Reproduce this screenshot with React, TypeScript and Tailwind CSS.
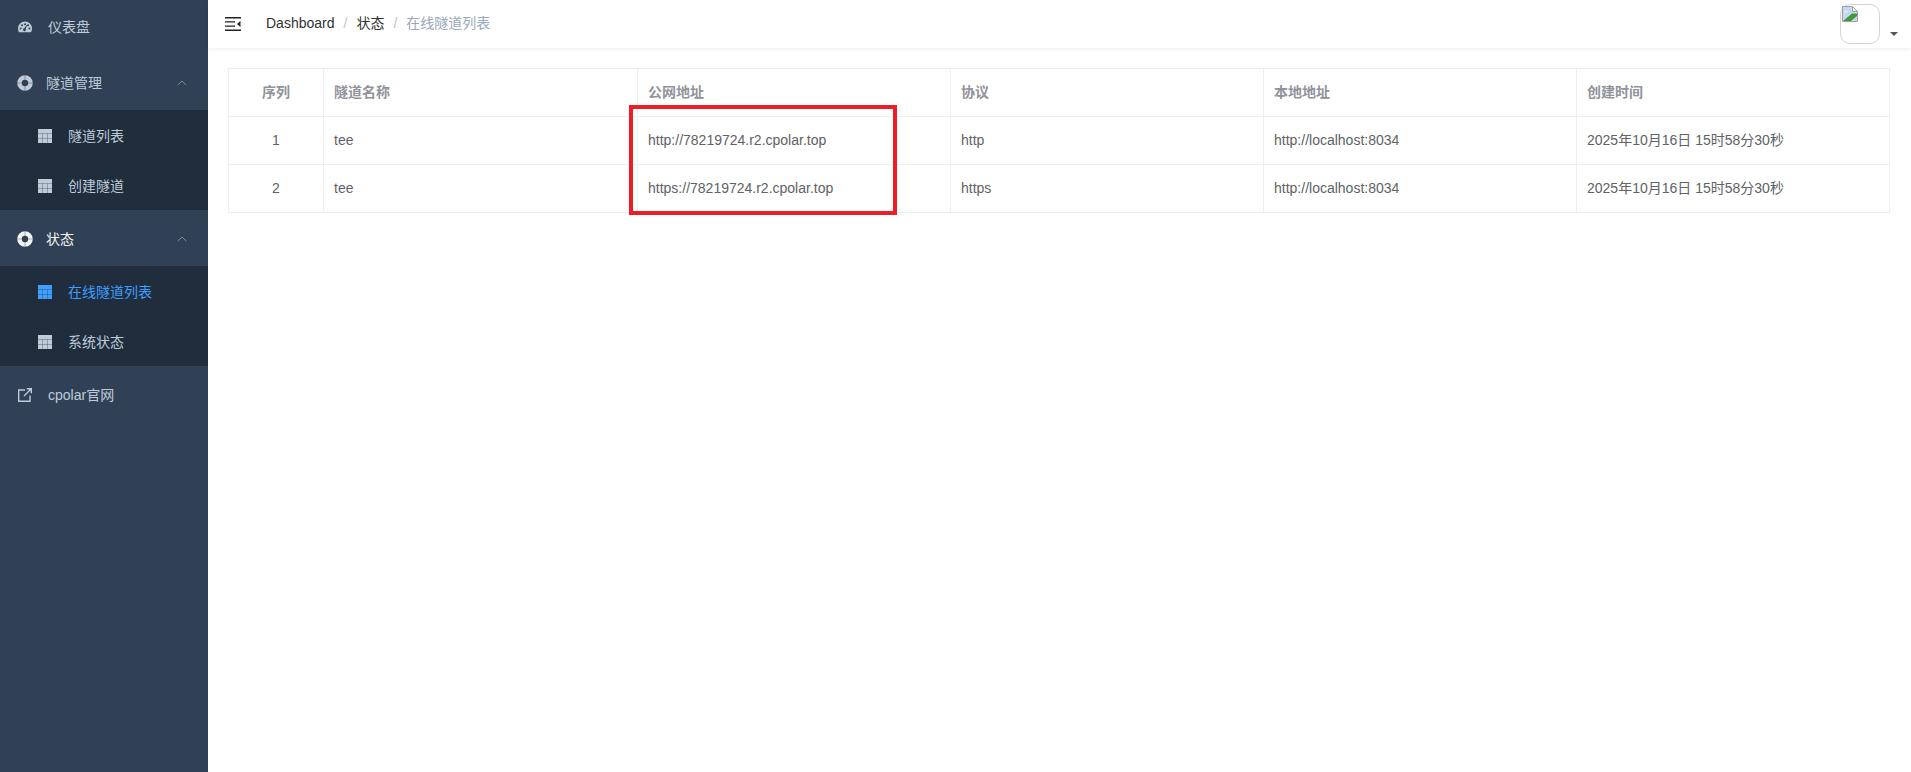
const cjk = "font-['Liberation_Sans','Noto_Sans_CJK_SC',sans-serif]";

function GaugeIcon() {
  return (
    <svg width="14" height="12" viewBox="0 0 14 12" className="shrink-0">
      <path
        fill="#bfcbd9"
        fillRule="evenodd"
        d="M7 0.5a7 7 0 0 1 7 7c0 1.5-.4 2.9-1.1 3.8H1.1C.4 10.4 0 9 0 7.5a7 7 0 0 1 7-7ZM2.6 6.4a1 1 0 1 0 0 2 1 1 0 0 0 0-2Zm1.5-3.2a1 1 0 1 0 0 2 1 1 0 0 0 0-2Zm3-1a1 1 0 1 0 0 2 1 1 0 0 0 0-2Zm3 1a1 1 0 1 0 0 2 1 1 0 0 0 0-2Zm1.3 3.2a1 1 0 1 0 0 2 1 1 0 0 0 0-2ZM8.6 4 6.4 7.2a1.5 1.5 0 1 0 1.3.6L9.3 4.3Z"
      />
    </svg>
  );
}

function RingIcon({ color }: { color: string }) {
  return (
    <svg width="16" height="16" viewBox="0 0 16 16" className="shrink-0">
      <circle cx="8" cy="8" r="5.5" fill="none" stroke={color} strokeWidth="4.6" />
      <path d="M0 8h5M11 8h5M8 0v5M8 11v5" stroke="#304156" strokeWidth="0.8" strokeOpacity="0.5" />
    </svg>
  );
}

function TableIcon({ color }: { color: string }) {
  return (
    <svg width="14" height="14" viewBox="0 0 14 14" className="shrink-0">
      <rect width="14" height="14" fill={color} />
      <path d="M0 4.5h14M0 9.5h14M4.5 4.5V14M9.5 4.5V14" stroke="#1f2d3d" strokeWidth="1" strokeOpacity="0.3" />
    </svg>
  );
}

function ExternalIcon() {
  return (
    <svg width="14" height="14" viewBox="0 0 14 14" fill="none" stroke="#bfcbd9" strokeWidth="1.4" className="shrink-0">
      <path d="M7 2H.7v11.3H12V7.5" />
      <path d="M6 8l7-7M8.8.7h4.5v4.5" />
    </svg>
  );
}

function Chevron() {
  return (
    <svg width="10" height="6" viewBox="0 0 10 6" fill="none" stroke="#7d8a99" strokeWidth="1" className="ml-auto mr-[21px] shrink-0">
      <path d="M.8 5 5 1l4.2 4" />
    </svg>
  );
}

function Hamburger() {
  return (
    <svg width="16" height="14" viewBox="0 0 16 14" className="shrink-0">
      <path d="M0 0h16v1.6H0zM0 12.4h16V14H0zM0 4.2h10v1.4H0zM0 8.4h10v1.4H0zM15.5 4v6L12 7z" fill="#222" />
    </svg>
  );
}

function BrokenImage() {
  return (
    <svg width="16" height="16" viewBox="0 0 16 16" className="absolute left-[1px] top-[1px]">
      <path d="M.5.5h10l5 5v10H.5z" fill="#c6d8f2" stroke="#a0a0a0" />
      <path d="M10.5.5v5h5z" fill="#fff" stroke="#a0a0a0" />
      <path d="M1 15 10 7.5h5V10l-6 5z" fill="#3f9b3a" />
      <path d="M2.5 6.5c0-1.5 3-1.5 4-.5z" fill="#fff" />
    </svg>
  );
}

const columns = ["隧道名称", "公网地址", "协议", "本地地址", "创建时间"];

const rows = [
  ["1", "tee", "http://78219724.r2.cpolar.top", "http", "http://localhost:8034", "2025年10月16日 15时58分30秒"],
  ["2", "tee", "https://78219724.r2.cpolar.top", "https", "http://localhost:8034", "2025年10月16日 15时58分30秒"],
];

function SubItem({ label, active }: { label: string; active?: boolean }) {
  return (
    <div className={`flex h-[50px] items-center pl-[38px] pt-[1px] text-sm ${active ? "text-[#409eff]" : "text-[#bfcbd9]"}`}>
      <TableIcon color={active ? "#409eff" : "#bfcbd9"} />
      <span className="ml-[16px]">{label}</span>
    </div>
  );
}

function GroupTitle({ label, bright }: { label: string; bright?: boolean }) {
  return (
    <div className={`flex h-[56px] items-center pl-[17px] pt-[2px] text-sm ${bright ? "text-[#f4f4f5]" : "text-[#bfcbd9]"}`}>
      <RingIcon color={bright ? "#f4f4f5" : "#bfcbd9"} />
      <span className="ml-[13px]">{label}</span>
      <Chevron />
    </div>
  );
}

export default function App() {
  return (
    <div className={`flex h-[772px] w-full overflow-hidden bg-white ${cjk}`}>
      <aside className="h-full w-[208px] shrink-0 bg-[#304156]">
        <div className="flex h-[54px] items-center pl-[18px] text-sm text-[#bfcbd9]">
          <GaugeIcon />
          <span className="ml-[16px]">仪表盘</span>
        </div>
        <GroupTitle label="隧道管理" />
        <div className="bg-[#1f2d3d]">
          <SubItem label="隧道列表" />
          <SubItem label="创建隧道" />
        </div>
        <GroupTitle label="状态" bright />
        <div className="bg-[#1f2d3d]">
          <SubItem label="在线隧道列表" active />
          <SubItem label="系统状态" />
        </div>
        <div className="flex h-[56px] items-center pl-[18px] pt-[2px] text-sm text-[#bfcbd9]">
          <ExternalIcon />
          <span className="ml-[16px]">cpolar官网</span>
        </div>
      </aside>

      <main className="min-w-0 flex-1">
        <header className="flex h-[48px] items-center pl-[17px] pr-[13px] shadow-[0_1px_4px_rgba(0,21,41,0.08)]">
          <Hamburger />
          <nav className="ml-[25px] mb-[2px] flex items-center text-sm text-[#303133]">
            <span>Dashboard</span>
            <span className="mx-[9px] text-[#c0c4cc]">/</span>
            <span>状态</span>
            <span className="mx-[9px] text-[#c0c4cc]">/</span>
            <span className="text-[#97a8be]">在线隧道列表</span>
          </nav>
          <div className="relative ml-auto h-[40px] w-[40px] rounded-[10px] border border-[#d4d4d4]">
            <BrokenImage />
          </div>
          <div className="ml-[10px] mt-[19px] h-0 w-0 border-x-[4px] border-t-[4px] border-x-transparent border-t-[#555]" />
        </header>

        <section className="pl-[20px] pr-[21px] pt-[20px]">
          <div className="relative">
            <table className="w-full table-fixed border-collapse text-sm">
              <colgroup>
                <col className="w-[95px]" />
                <col className="w-[314px]" />
                <col />
                <col />
                <col />
                <col />
              </colgroup>
              <thead>
                <tr className="h-[48px] font-bold text-[#909399]">
                  <th className="border border-[#ebeef5] pb-[2px] text-center font-bold">序列</th>
                  {columns.map((c) => (
                    <th key={c} className="border border-[#ebeef5] px-[10px] pb-[2px] text-left font-bold">
                      {c}
                    </th>
                  ))}
                </tr>
              </thead>
              <tbody>
                {rows.map((r) => (
                  <tr key={r[0]} className="h-[48px] text-[#606266]">
                    {r.map((cell, i) => (
                      <td key={i} className={`border border-[#ebeef5] px-[10px] pb-[2px] ${i === 0 ? "text-center" : ""}`}>
                        {cell}
                      </td>
                    ))}
                  </tr>
                ))}
              </tbody>
            </table>
            {/* red annotation box drawn over the table */}
            <div className="absolute left-[401px] top-[37px] h-[110px] w-[268px] border-[4px] border-[#ee1c24]" />
          </div>
        </section>
      </main>
    </div>
  );
}
